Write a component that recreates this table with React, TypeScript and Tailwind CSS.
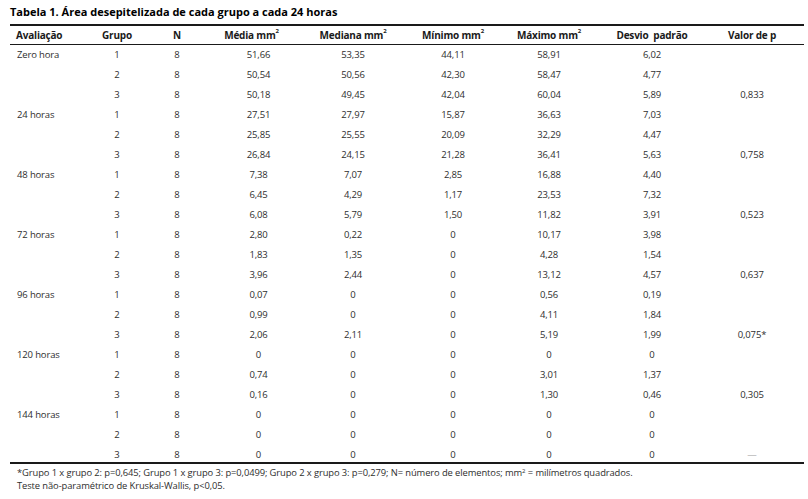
const font = { fontFamily: '"Open Sans", "Noto Sans", sans-serif' };

type Row = {
  label?: string;
  grupo: string;
  vals: string[];
  p?: string;
};

const rows: Row[] = [
  { label: "Zero hora", grupo: "1", vals: ["51,66", "53,35", "44,11", "58,91", "6,02"] },
  { grupo: "2", vals: ["50,54", "50,56", "42,30", "58,47", "4,77"] },
  { grupo: "3", vals: ["50,18", "49,45", "42,04", "60,04", "5,89"], p: "0,833" },
  { label: "24 horas", grupo: "1", vals: ["27,51", "27,97", "15,87", "36,63", "7,03"] },
  { grupo: "2", vals: ["25,85", "25,55", "20,09", "32,29", "4,47"] },
  { grupo: "3", vals: ["26,84", "24,15", "21,28", "36,41", "5,63"], p: "0,758" },
  { label: "48 horas", grupo: "1", vals: ["7,38", "7,07", "2,85", "16,88", "4,40"] },
  { grupo: "2", vals: ["6,45", "4,29", "1,17", "23,53", "7,32"] },
  { grupo: "3", vals: ["6,08", "5,79", "1,50", "11,82", "3,91"], p: "0,523" },
  { label: "72 horas", grupo: "1", vals: ["2,80", "0,22", "0", "10,17", "3,98"] },
  { grupo: "2", vals: ["1,83", "1,35", "0", "4,28", "1,54"] },
  { grupo: "3", vals: ["3,96", "2,44", "0", "13,12", "4,57"], p: "0,637" },
  { label: "96 horas", grupo: "1", vals: ["0,07", "0", "0", "0,56", "0,19"] },
  { grupo: "2", vals: ["0,99", "0", "0", "4,11", "1,84"] },
  { grupo: "3", vals: ["2,06", "2,11", "0", "5,19", "1,99"], p: "0,075*" },
  { label: "120 horas", grupo: "1", vals: ["0", "0", "0", "0", "0"] },
  { grupo: "2", vals: ["0,74", "0", "0", "3,01", "1,37"] },
  { grupo: "3", vals: ["0,16", "0", "0", "1,30", "0,46"], p: "0,305" },
  { label: "144 horas", grupo: "1", vals: ["0", "0", "0", "0", "0"] },
  { grupo: "2", vals: ["0", "0", "0", "0", "0"] },
  { grupo: "3", vals: ["0", "0", "0", "0", "0"], p: "—" },
];

// column template shared by header and body
const cols = "grid grid-cols-[77px_60px_60px_93px_106px_94px_98px_108px_98px]";

function Sup() {
  return <span className="text-[6px] align-top relative top-[-1px]">2</span>;
}

export default function App() {
  return (
    <div className="w-[808px] h-[499px] bg-white text-[#2e2e2e]" style={font}>
      <div className="pl-[10px] pr-[4px] pt-[4px]">
        <div className="text-[11px] font-bold text-black leading-[16px]">
          Tabela 1. Área desepitelizada de cada grupo a cada 24 horas
        </div>

        <div className="mt-[4px] border-t-[2px] border-[#1a1a1a]">
          {/* Header */}
          <div className={`${cols} h-[19px] items-center text-[10px] font-bold text-[#1a1a1a] border-b border-[#1a1a1a] tracking-[-0.2px]`}>
            <div className="pl-[6px]">Avaliação</div>
            <div className="text-center">Grupo</div>
            <div className="text-center">N</div>
            <div className="text-center pr-[4px]">
              Média mm<Sup />
            </div>
            <div className="text-center">
              Mediana mm<Sup />
            </div>
            <div className="text-center">
              Mínimo mm<Sup />
            </div>
            <div className="text-center">
              Máximo mm<Sup />
            </div>
            <div className="text-center">Desvio&nbsp; padrão</div>
            <div className="text-center pr-[6px]">Valor de p</div>
          </div>

          {/* Body */}
          <div className="border-b-[2px] border-[#1a1a1a]">
            {rows.map((r, i) => (
              <div
                key={i}
                className={`${cols} ${i === rows.length - 1 ? "h-[17px]" : "h-[20px]"} items-start pt-[3px] text-[9.5px] leading-[14px] tracking-[-0.15px]`}
              >
                <div className="pl-[7px]">{r.label ?? ""}</div>
                <div className="text-center">{r.grupo}</div>
                <div className="text-center">8</div>
                <div className="text-center pl-[10px]">{r.vals[0]}</div>
                <div className="text-center">{r.vals[1]}</div>
                <div className="text-center">{r.vals[2]}</div>
                <div className="text-center">{r.vals[3]}</div>
                <div className="text-center">{r.vals[4]}</div>
                <div className={`text-center pr-[6px] ${r.p === "—" ? "text-[#9a9a9a]" : ""}`}>{r.p ?? ""}</div>
              </div>
            ))}
          </div>
        </div>

        <div className="mt-[2px] pl-[7px] text-[9.4px] leading-[13px] tracking-[-0.1px] text-[#2e2e2e]">
          <div>
            *Grupo 1 x grupo 2: p=0,645; Grupo 1 x grupo 3: p=0,0499; Grupo 2 x grupo 3: p=0,279; N= número de elementos; mm
            <Sup />
            {" "}= milímetros quadrados.
          </div>
          <div>Teste não-paramétrico de Kruskal-Wallis, p&lt;0,05.</div>
        </div>
      </div>
    </div>
  );
}
